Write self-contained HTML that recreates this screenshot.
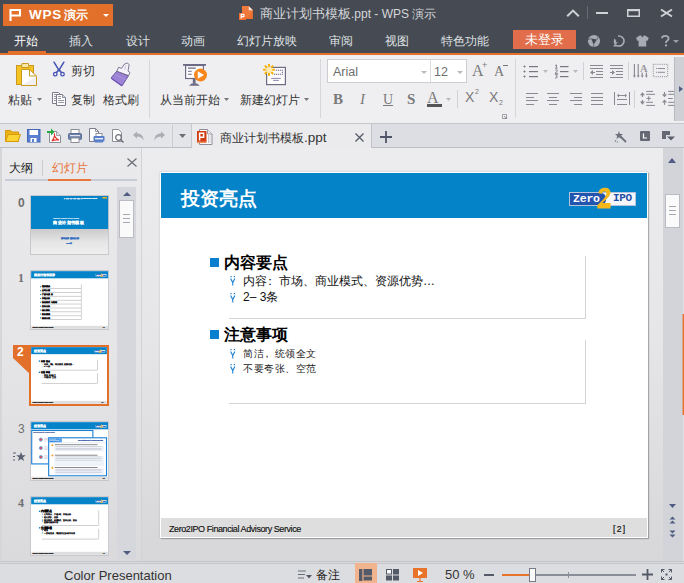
<!DOCTYPE html>
<html><head><meta charset="utf-8">
<style>
*{margin:0;padding:0;box-sizing:border-box}
html,body{width:684px;height:583px;overflow:hidden;background:#e9e9eb;font-family:"Liberation Sans",sans-serif;}
.a{position:absolute}
.t{position:absolute;white-space:nowrap}
svg{position:absolute;overflow:visible}
.tab{color:#dfe1e4;font-size:12px;top:34px;line-height:14px}
.rb{color:#333;font-size:12px;line-height:14px}
.th .t{-webkit-text-stroke:1.4px currentColor !important}
</style></head><body>
<!-- ============ TOP DARK ============ -->
<div class="a" style="left:0;top:0;width:684px;height:53px;background:#464a52"></div>
<div class="a" style="left:0;top:53px;width:684px;height:2px;background:#e5702c"></div>
<!-- WPS button -->
<div class="a" style="left:3px;top:4px;width:110px;height:22px;background:#e2702a"></div>
<div class="t" style="left:29px;top:6px;font-size:13.5px;color:#fff;font-weight:bold;line-height:18px;letter-spacing:0.8px">WPS</div>
<div class="t" style="left:64px;top:6px;font-size:12.2px;color:#fff;font-weight:bold;line-height:18px">演示</div>
<svg style="left:9px;top:9px" width="13" height="13"><path d="M1.5 12V1H11V6.5H1.5" fill="none" stroke="#fff" stroke-width="2.1"/></svg>
<svg style="left:103px;top:14px" width="6" height="3"><path d="M0 0H6L3 3z" fill="#fff"/></svg>
<!-- title -->
<svg style="left:238px;top:5px" width="17" height="16" viewBox="0 0 17 16"><path d="M4 1H10.8L14.8 5V14H4z" fill="#f07a3c"/><path d="M10.8 1.2V5.2H14.8z" fill="#fbeee4"/><path d="M8 14L14.8 6.5V14z" fill="#e86a2c" opacity="0.6"/><rect x="1" y="8" width="7" height="7" fill="#f06e30"/><path d="M3.2 13.6V9.3H5.9V11.6H3.2" fill="none" stroke="#fff" stroke-width="1.3"/></svg>
<div class="t" style="left:260px;top:6px;font-size:12px;color:#d3d6da;line-height:16px"><span style="font-size:12.6px">商业计划书模板</span>.ppt - WPS <span style="font-size:12.3px">演示</span></div>
<!-- window controls -->
<svg style="left:566px;top:9px" width="14" height="9"><path d="M1.2 7.2L7 1.6L12.8 7.2" fill="none" stroke="#cfd1d6" stroke-width="2.1"/></svg>
<div class="a" style="left:587px;top:6px;width:1px;height:13px;background:#676b72"></div>
<div class="a" style="left:596px;top:12px;width:12px;height:2px;background:#cfd1d6"></div>
<svg style="left:627px;top:9px" width="13" height="8"><rect x="0.75" y="0.75" width="11.5" height="6.5" fill="none" stroke="#cfd1d6" stroke-width="1.5"/><rect x="0" y="0" width="13" height="2.2" fill="#cfd1d6"/></svg>
<svg style="left:660px;top:9px" width="13" height="8"><path d="M1 0.5L12 7.5M12 0.5L1 7.5" stroke="#cfd1d6" stroke-width="2"/></svg>
<!-- tabs -->
<div class="t tab" style="left:14px;color:#fff">开始</div>
<div class="a" style="left:8px;top:51px;width:38px;height:2px;background:#e5702c"></div>
<div class="t tab" style="left:69px">插入</div>
<div class="t tab" style="left:126px">设计</div>
<div class="t tab" style="left:181px">动画</div>
<div class="t tab" style="left:237px">幻灯片放映</div>
<div class="t tab" style="left:329px">审阅</div>
<div class="t tab" style="left:385px">视图</div>
<div class="t tab" style="left:441px">特色功能</div>
<div class="a" style="left:513px;top:30px;width:63px;height:19px;background:#e26d4a"></div>
<div class="t tab" style="left:525px;top:33px;color:#fff;font-size:12.5px">未登录</div>
<!-- right icons in tab row -->
<svg style="left:587px;top:34px" width="14" height="14"><circle cx="7" cy="7" r="6.1" fill="#a7abb3"/><path d="M4.2 4.6L10 5.6L6.6 10.8z" fill="#464a52"/><path d="M10 5.6L11.8 1.6M6.6 10.8L7 13.5M4.2 4.6L0.8 5.6" stroke="#5a5e66" stroke-width="0.9"/></svg>
<svg style="left:612px;top:34px" width="14" height="14"><path d="M6.1 2.1A5 5 0 1 1 5.3 11.7H1.6" fill="none" stroke="#a7abb3" stroke-width="1.6"/><path d="M2.6 4.5C1 7.5 1.6 10.2 4.2 11.3C4.8 8.6 4.2 6 2.6 4.5z" fill="#a7abb3"/><path d="M3 10.5L5.5 8" stroke="#a7abb3" stroke-width="1"/></svg>
<svg style="left:636px;top:35px" width="13" height="12" viewBox="0 0 13 12"><path d="M0 3L3.6 0.4H5L6.4 2.6L7.8 0.4H9.2L12.8 3L11.3 6L10.2 5.4V11.6H2.6V5.4L1.5 6z" fill="#a7abb3"/></svg>
<svg style="left:661px;top:35px" width="9" height="12" viewBox="0 0 9 12"><path d="M1 3.2C1 1.6 2.4 0.8 4.3 0.8C6.3 0.8 7.6 1.8 7.6 3.4C7.6 5.4 5 5.6 5 7.6V8" fill="none" stroke="#a7abb3" stroke-width="1.8"/><rect x="4" y="9.4" width="2" height="2" fill="#a7abb3"/></svg>
<svg style="left:673px;top:40px" width="6" height="4"><path d="M0 0H6L3 3z" fill="#9a9ea6"/></svg>

<!-- ============ RIBBON ============ -->
<div class="a" style="left:0;top:55px;width:684px;height:69px;background:#efeff1;border-bottom:1px solid #c8c9ce"></div>

<!-- paste -->
<svg style="left:12px;top:58px" width="30" height="32" viewBox="0 0 30 32"><rect x="4.5" y="7.5" width="17" height="19" fill="#f5c324" stroke="#c99a22"/><path d="M9.5 9.5L10 5.5H16.5L17 9.5z" fill="#f8e6a6" stroke="#c99a22"/><path d="M9.5 11.5H17.5L24.5 18.5V27.5H9.5z" fill="#fff" stroke="#c99a22"/><path d="M17.5 11.5V18H24.5z" fill="#fff" stroke="#c99a22" stroke-linejoin="round"/><path d="M10 27L24 18.5V27z" fill="#f0f0f2"/><path d="M24.5 18.5V27.5H9.5" fill="none" stroke="#c99a22"/></svg>
<div class="t rb" style="left:8px;top:93px">粘贴</div>
<svg style="left:37px;top:98px" width="5" height="3"><path d="M0 0H5L2.5 3z" fill="#777"/></svg>
<!-- scissors -->
<svg style="left:48px;top:58px" width="22" height="22" viewBox="0 0 22 22"><path d="M6 4.2L11.2 12.6M15.9 4.2L10.7 12.6" stroke="#4552b4" stroke-width="1.5" fill="none" stroke-linecap="round"/><path d="M11 11.5L8.5 14.5M11 11.5L13.3 14.5" stroke="#4552b4" stroke-width="1.6"/><circle cx="7.3" cy="16.2" r="1.75" fill="none" stroke="#4552b4" stroke-width="1.3"/><circle cx="14.5" cy="16.2" r="1.75" fill="none" stroke="#4552b4" stroke-width="1.3"/></svg>
<div class="t rb" style="left:71px;top:64px">剪切</div>
<!-- copy -->
<svg style="left:52px;top:92px" width="15" height="15" viewBox="0 0 15 15"><path d="M0.5 0.5H6.5L8 2V11.5H0.5z" fill="#fbfbfc" stroke="#7c7c8e"/><path d="M2 2.5H5M2 4.5H5M2 6.5H4M2 8.5H4" stroke="#8a8a9a" stroke-width="0.9"/><path d="M4.5 2.5H10.5L13.5 5.5V13.5H4.5z" fill="#fdfdfe" stroke="#7c7c8e"/><path d="M10.5 2.5V5.5H13.5" fill="#d8d8e0" stroke="#7c7c8e" stroke-width="0.8"/><path d="M6.2 4.5H9M6.2 6.5H9M6.2 8.5H12M6.2 10.5H12" stroke="#8a8a9a" stroke-width="0.9"/></svg>
<div class="t rb" style="left:71px;top:93px">复制</div>
<!-- brush -->
<svg style="left:105px;top:58px" width="32" height="32" viewBox="0 0 32 32"><path d="M11.8 13.2L23.5 17.6L17 28L6 20z" fill="#9c82d4" stroke="#5f4a9c" stroke-width="0.9" stroke-linejoin="round"/><path d="M7.5 20.5L17 27L16.2 28L6.5 21.2z" fill="#7256b8"/><path d="M10 16.5L20.5 21.5" stroke="#ad95de" stroke-width="1"/><path d="M13.7 9.3L16.5 10.4L19.5 6L22.2 5L24.2 6.6L23 12.9L25 14.6L23.5 17.6L11.8 13.2z" fill="#f6f4fa" stroke="#5f5a78" stroke-width="0.8" stroke-linejoin="round"/><path d="M21 7L19.5 12" stroke="#d4d0e4" stroke-width="1.2"/></svg>
<div class="t rb" style="left:103px;top:93px">格式刷</div>
<div class="a" style="left:149px;top:60px;width:1px;height:58px;background:#d6d7db"></div>
<!-- slideshow from current -->
<svg style="left:178px;top:58px" width="35" height="32" viewBox="0 0 35 32"><rect x="5" y="6" width="23" height="1.8" fill="#6d6b86"/><rect x="7.6" y="7.5" width="17.8" height="13" fill="#fdfdfe" stroke="#6d6b86" stroke-width="1.2"/><path d="M10 10.1H17.8M10 13.2H13.7M10 16.2H13.7" stroke="#6d6b86" stroke-width="1.1"/><path d="M14.8 20.8H17.6V25.8H14.8z" fill="#6d6b86"/><path d="M11 27.7L13.5 25.6H19L21.8 27.7z" fill="#6d6b86"/><circle cx="22.5" cy="17" r="6.5" fill="#f7861c"/><path d="M19.8 13.2L26 17L19.8 20.8z" fill="#fff"/></svg>
<div class="t rb" style="left:160px;top:93px">从当前开始</div>
<svg style="left:224px;top:98px" width="5" height="3"><path d="M0 0H5L2.5 3z" fill="#777"/></svg>
<!-- new slide -->
<svg style="left:258px;top:58px" width="35" height="32" viewBox="0 0 35 32"><rect x="8.6" y="9.4" width="18.8" height="17.2" fill="#fdfdfe" stroke="#6d6b86" stroke-width="1.2"/><rect x="17.799999999999997" y="11.7" width="1.2" height="1.2" fill="#7f7aa0"/><rect x="17.799999999999997" y="15.7" width="1.2" height="1.2" fill="#7f7aa0"/><rect x="19.799999999999997" y="11.7" width="1.2" height="1.2" fill="#7f7aa0"/><rect x="19.799999999999997" y="15.7" width="1.2" height="1.2" fill="#7f7aa0"/><rect x="21.799999999999997" y="11.7" width="1.2" height="1.2" fill="#7f7aa0"/><rect x="21.799999999999997" y="15.7" width="1.2" height="1.2" fill="#7f7aa0"/><rect x="23.799999999999997" y="11.7" width="1.2" height="1.2" fill="#7f7aa0"/><rect x="23.799999999999997" y="15.7" width="1.2" height="1.2" fill="#7f7aa0"/><rect x="23.8" y="13.7" width="1.2" height="1.2" fill="#7f7aa0"/><rect x="15.9" y="15.7" width="1.2" height="1.2" fill="#7f7aa0"/><path d="M13.2 20.4H22.8M15.1 22.4H20.8" stroke="#8e88b0" stroke-width="1"/><circle cx="11" cy="11.8" r="3.6" fill="#fde9a8" opacity="0.9"/><path d="M14.30 11.80L16.90 11.80M13.33 14.13L15.17 15.97M11.00 15.10L11.00 17.70M8.67 14.13L6.83 15.97M7.70 11.80L5.10 11.80M8.67 9.47L6.83 7.63M11.00 8.50L11.00 5.90M13.33 9.47L15.17 7.63" stroke="#f7b000" stroke-width="2" stroke-linecap="butt"/></svg>
<div class="t rb" style="left:240px;top:93px">新建幻灯片</div>
<svg style="left:304px;top:98px" width="5" height="3"><path d="M0 0H5L2.5 3z" fill="#777"/></svg>
<div class="a" style="left:320px;top:59px;width:1px;height:59px;background:#d6d7db"></div>
<!-- font box -->
<div class="a" style="left:327px;top:59px;width:140px;height:24px;background:#fff;border:1px solid #cdced3"></div>
<div class="a" style="left:430px;top:60px;width:1px;height:22px;background:#dcdde1"></div>
<div class="t" style="left:333px;top:65px;font-size:12.5px;color:#6e6e6e;line-height:14px">Arial</div>
<div class="t" style="left:434px;top:65px;font-size:12.5px;color:#6e6e6e;line-height:14px">12</div>
<svg style="left:421px;top:71px" width="6" height="3"><path d="M0 0H6L3 3z" fill="#b8b9be"/></svg>
<svg style="left:457px;top:71px" width="6" height="3"><path d="M0 0H6L3 3z" fill="#b8b9be"/></svg>
<div class="t" style="left:472px;top:63px;font-size:16px;color:#7a7a7a;line-height:16px;font-family:'Liberation Serif',serif">A</div>
<div class="t" style="left:482px;top:61px;font-size:9px;color:#777;line-height:9px">+</div>
<div class="t" style="left:494px;top:64px;font-size:14px;color:#777;line-height:15px;font-family:'Liberation Serif',serif">A</div>
<div class="a" style="left:503px;top:65px;width:5px;height:1px;background:#777"></div>
<!-- BIUS -->
<div class="t" style="left:333px;top:92px;font-size:15px;color:#7a7a7a;line-height:15px;font-weight:bold;font-family:'Liberation Serif',serif">B</div>
<div class="t" style="left:360px;top:92px;font-size:15px;color:#7a7a7a;line-height:15px;font-style:italic;font-family:'Liberation Serif',serif">I</div>
<div class="t" style="left:383px;top:92px;font-size:14px;color:#7a7a7a;line-height:15px;font-family:'Liberation Serif',serif;text-decoration:underline">U</div>
<div class="t" style="left:407px;top:92px;font-size:15px;color:#7a7a7a;line-height:15px;font-family:'Liberation Serif',serif;font-weight:bold">S</div>
<div class="t" style="left:427px;top:90px;font-size:16px;color:#7a7a7a;line-height:15px;font-family:'Liberation Serif',serif">A</div>
<div class="a" style="left:427px;top:104px;width:15px;height:3px;background:#555"></div>
<svg style="left:446px;top:98px" width="5" height="3"><path d="M0 0H5L2.5 3z" fill="#b8b9be"/></svg>
<div class="a" style="left:457px;top:90px;width:1px;height:18px;background:#d0d1d6"></div>
<div class="t" style="left:465px;top:90px;font-size:14px;color:#7a7a7a;line-height:15px">X</div>
<div class="t" style="left:475px;top:88px;font-size:7px;color:#7a7a7a;line-height:8px">2</div>
<div class="t" style="left:489px;top:90px;font-size:14px;color:#7a7a7a;line-height:15px">X</div>
<div class="t" style="left:499px;top:99px;font-size:7px;color:#7a7a7a;line-height:8px">2</div>
<svg style="left:502px;top:114px" width="5" height="5"><path d="M0.5 4.5V0.5H4.5V4.5z" fill="none" stroke="#8a8a92" stroke-width="0.8"/><path d="M2 2L4.5 4.5M3 4.5H4.5V3" stroke="#8a8a92" stroke-width="0.8" fill="none"/></svg>
<div class="a" style="left:515px;top:59px;width:1px;height:59px;background:#d6d7db"></div>
<!-- paragraph icons row1 -->
<svg style="left:523px;top:64px" width="26" height="15" viewBox="0 0 26 15"><g fill="#77787f"><path d="M1 1.5H2V2H2.5V3H2V3.5H1V3H0.5V2H1z"/><path d="M1 6.5H2V7H2.5V8H2V8.5H1V8H0.5V7H1z"/><path d="M1 11.5H2V12H2.5V13H2V13.5H1V13H0.5V12H1z"/><rect x="6" y="2" width="9" height="1.2"/><rect x="6" y="7" width="9" height="1.2"/><rect x="6" y="12" width="9" height="1.2"/></g><path d="M20 6H25L22.5 9z" fill="#b9b9bf"/></svg>
<svg style="left:554px;top:64px" width="26" height="15" viewBox="0 0 26 15"><g fill="none" stroke="#77787f" stroke-width="0.9"><path d="M1.2 1.6L2.4 0.8V4.2M1.2 4.2H3.6"/><path d="M1 6.4C1.5 5.6 3.5 5.6 3.5 6.8C3.5 7.8 1 8.5 1 9.4H3.8"/><path d="M1 10.8H3.6L2.2 12.2C3.8 12.2 3.8 14.4 1 14"/></g><g fill="#77787f"><rect x="6" y="2" width="8.5" height="1.2"/><rect x="6" y="7" width="8.5" height="1.2"/><rect x="6" y="12" width="8.5" height="1.2"/></g><path d="M19 6H24L21.5 9z" fill="#b9b9bf"/></svg>
<div class="a" style="left:583px;top:62px;width:1px;height:18px;background:#d0d1d6"></div>
<svg style="left:590px;top:65px" width="14" height="14" viewBox="0 0 14 14"><g fill="#8a8b92"><rect x="0" y="0" width="13" height="1"/><rect x="0" y="3" width="13" height="1"/><rect x="6" y="6" width="7" height="1"/><rect x="6" y="9" width="7" height="1"/><rect x="0" y="12" width="13" height="1"/><path d="M0 7.5L3 5V10z"/><rect x="2" y="7" width="3" height="1"/></g></svg>
<svg style="left:610px;top:65px" width="14" height="14" viewBox="0 0 14 14"><g fill="#8a8b92"><rect x="0" y="0" width="13" height="1"/><rect x="0" y="3" width="13" height="1"/><rect x="6" y="6" width="7" height="1"/><rect x="6" y="9" width="7" height="1"/><rect x="0" y="12" width="13" height="1"/><path d="M5 7.5L2 5V10z"/><rect x="0" y="7" width="3" height="1"/></g></svg>
<div class="a" style="left:628px;top:62px;width:1px;height:18px;background:#d0d1d6"></div>
<svg style="left:630px;top:60px" width="44" height="22" viewBox="0 0 44 22"><g stroke="#85868e" stroke-width="1.1" fill="none"><path d="M4.4 4V16M8.2 4V16M12.2 12.6V16M16.4 12.6V16"/></g><g fill="#85868e"><path d="M3 15.4H5.8L4.4 17.8zM6.8 15.4H9.6L8.2 17.8zM10.8 15.4H13.6L12.2 17.8zM15 15.4H17.8L16.4 17.8z"/></g><text x="10" y="12" font-size="10.5" fill="#9a9aa2" font-family="Liberation Serif" font-weight="bold">A</text><rect x="23.3" y="4.3" width="14.4" height="12.4" fill="none" stroke="#8a8b92" stroke-width="1" stroke-dasharray="1 1.1"/><path d="M27.7 8.5H35M27.7 12.3H35" stroke="#8e8f96" stroke-width="1"/><rect x="26" y="8" width="1" height="1" fill="#8e8f96"/><rect x="26" y="11.8" width="1" height="1" fill="#8e8f96"/></svg>
<!-- expander right -->
<div class="a" style="left:674px;top:57px;width:10px;height:64px;background:#cfd0d6;border-left:1px solid #b9bac1"></div>
<svg style="left:679px;top:86px" width="4" height="6"><path d="M0 0L4 3L0 6z" fill="#4f5d83"/></svg>
<!-- paragraph icons row2 -->
<svg style="left:526px;top:93px" width="13" height="12"><g fill="#8a8b92"><rect x="0" y="0" width="12" height="1"/><rect x="0" y="4" width="8" height="1"/><rect x="0" y="7" width="12" height="1"/><rect x="0" y="11" width="8" height="1"/></g></svg>
<svg style="left:547px;top:93px" width="13" height="12"><g fill="#8a8b92"><rect x="0" y="0" width="12" height="1"/><rect x="2" y="4" width="8" height="1"/><rect x="0" y="7" width="12" height="1"/><rect x="2" y="11" width="8" height="1"/></g></svg>
<svg style="left:570px;top:93px" width="13" height="12"><g fill="#8a8b92"><rect x="0" y="0" width="12" height="1"/><rect x="4" y="4" width="8" height="1"/><rect x="0" y="7" width="12" height="1"/><rect x="4" y="11" width="8" height="1"/></g></svg>
<svg style="left:591px;top:93px" width="13" height="12"><g fill="#8a8b92"><rect x="0" y="0" width="12" height="1"/><rect x="0" y="4" width="12" height="1"/><rect x="0" y="7" width="12" height="1"/><rect x="0" y="11" width="12" height="1"/></g></svg>
<svg style="left:614px;top:92px" width="16" height="14" viewBox="0 0 16 14"><g fill="#8a8b92"><rect x="0" y="0" width="1" height="13"/><rect x="15" y="0" width="1" height="13"/><rect x="3" y="7" width="10" height="1"/><rect x="3" y="12" width="10" height="1"/><rect x="4" y="3" width="8" height="1"/><path d="M3 3.5L5 1.5V5.5zM13 3.5L11 1.5V5.5z"/></g></svg>
<div class="a" style="left:634px;top:90px;width:1px;height:18px;background:#d0d1d6"></div>
<svg style="left:636px;top:88px" width="38" height="22" viewBox="0 0 38 22"><g fill="#86878f"><path d="M4 7.2L6.45 4.2L8.9 7.2z"/><rect x="5.9" y="7" width="1.1" height="2"/><path d="M4 13.6L6.45 16.8L8.9 13.6z"/><rect x="5.9" y="12" width="1.1" height="2"/><rect x="10.2" y="2.9" width="6.8" height="1"/><rect x="10.2" y="5.8" width="8.8" height="1"/><rect x="10.2" y="13.8" width="6.8" height="1"/><rect x="10.2" y="16.9" width="8.8" height="1"/><rect x="10.5" y="9.9" width="4.4" height="1"/><rect x="12.2" y="8.2" width="1" height="4.4"/><path d="M26 6.2L28.5 9.2L31 6.2z"/><rect x="27.95" y="4" width="1.1" height="2.4"/><path d="M26 14.6L28.5 11.6L31 14.6z"/><rect x="27.95" y="14.4" width="1.1" height="2.4"/><rect x="32.2" y="2.9" width="6" height="1"/><rect x="32.2" y="5.8" width="6" height="1"/><rect x="32.2" y="10" width="4.6" height="1"/><rect x="32.2" y="13.8" width="6" height="1"/><rect x="32.2" y="16.9" width="6" height="1"/></g></svg>
<!-- ============ QAT ============ -->
<div class="a" style="left:0;top:123px;width:684px;height:25px;background:#dddee3;border-top:1px solid #c6c7cc;border-bottom:1px solid #bdbec4"></div>
<div class="a" style="left:0;top:124px;width:192px;height:23px;background:#e4e5e9;border-right:1px solid #c8c9ce"></div>
<div class="a" style="left:192px;top:124px;width:180px;height:24px;background:#ebebed;border-right:1px solid #c3c4ca"></div>
<!-- folder -->
<svg style="left:5px;top:129px" width="16" height="14" viewBox="0 0 16 14"><path d="M0.5 1.5H5.5L7 3H13.5V12.5H0.5z" fill="#eab31b" stroke="#d4960b"/><path d="M0.5 12.5L3 5.5H15.5L13 12.5z" fill="#fbd433" stroke="#d99a0a" stroke-linejoin="round"/></svg>
<!-- save -->
<svg style="left:27px;top:129px" width="14" height="14" viewBox="0 0 14 14"><rect x="0.5" y="0.5" width="12.5" height="12.5" fill="#5b7fd0" stroke="#4466b8"/><rect x="2.5" y="1" width="8.5" height="5" fill="#fff"/><rect x="3.5" y="9" width="6" height="4" fill="#fff"/><rect x="5" y="10" width="2" height="3" fill="#5b7fd0"/></svg>
<!-- pdf -->
<svg style="left:47px;top:128px" width="15" height="15" viewBox="0 0 15 15"><path d="M2.5 3.5H9.5L13.5 7.5V14.5H2.5z" fill="#fff" stroke="#8c8d96"/><path d="M9.5 3.5V7.5H13.5" fill="#e5e5ea" stroke="#8c8d96" stroke-width="0.8"/><path d="M0 3H4V0.5L7.5 4L4 7.5V5H0z" fill="#28a745"/><path d="M5 13C7 10 8 8 7.5 6.5C7 8 9 11 12 12C9 11.5 6.5 12 5 13z" fill="none" stroke="#e0302a" stroke-width="1.2"/></svg>
<!-- print -->
<svg style="left:68px;top:129px" width="15" height="14" viewBox="0 0 15 14"><rect x="3" y="0.5" width="8" height="4" fill="#fff" stroke="#8c8d96"/><rect x="0.5" y="4.5" width="13" height="6" rx="1" fill="#6b7fa8" stroke="#5a6e98"/><rect x="2" y="6" width="10" height="1.2" fill="#dfe3ee"/><rect x="3" y="9" width="8" height="4.5" fill="#fff" stroke="#8c8d96"/></svg>
<!-- print preview -->
<svg style="left:89px;top:128px" width="16" height="16" viewBox="0 0 16 16"><path d="M0.5 0.5H6.5L9.5 3.5V13.5H0.5z" fill="#fff" stroke="#7c7c8e"/><path d="M6.5 0.5V3.5H9.5" fill="none" stroke="#7c7c8e" stroke-width="0.8"/><rect x="7" y="5.5" width="6" height="3" fill="#fff" stroke="#7c7c8e" stroke-width="0.8"/><rect x="4.5" y="8" width="11" height="5.5" rx="1" fill="#5b7fc8"/><rect x="6" y="10" width="8" height="1.4" fill="#e8eef8"/><rect x="6" y="12.5" width="8" height="2" fill="#5b7fc8"/></svg>
<!-- preview -->
<svg style="left:112px;top:129px" width="13" height="14" viewBox="0 0 13 14"><path d="M0.5 0.5H6.5L9.5 3.5V12.5H0.5z" fill="#fff" stroke="#8c8d96"/><circle cx="6.5" cy="8.5" r="2.8" fill="#fff" stroke="#6d6e78" stroke-width="1.2"/><path d="M8.5 10.5L11.5 13.5" stroke="#6d6e78" stroke-width="1.4"/></svg>
<!-- undo/redo -->
<svg style="left:133px;top:131px" width="11" height="10" viewBox="0 0 11 10"><path d="M0 4L4 0.5V2.5C8 2.5 10.5 4.5 10.5 9.5C9 6.5 7 5.5 4 5.5V7.5z" fill="#acadb4"/></svg>
<svg style="left:154px;top:131px" width="11" height="10" viewBox="0 0 11 10"><path d="M11 4L7 0.5V2.5C3 2.5 0.5 4.5 0.5 9.5C2 6.5 4 5.5 7 5.5V7.5z" fill="#acadb4"/></svg>
<div class="a" style="left:172px;top:125px;width:1px;height:22px;background:#cbccd1"></div>
<svg style="left:179px;top:134px" width="7" height="4"><path d="M0 0H7L3.5 4z" fill="#6c6f78"/></svg>
<!-- doc tab -->
<svg style="left:196px;top:129px" width="17" height="16" viewBox="0 0 17 16"><path d="M3.5 0.5H11.5L16 5V15.5H3.5z" fill="#fff" stroke="#8c8d96"/><path d="M11.5 0.5V5H16" fill="#ececf0" stroke="#8c8d96" stroke-width="0.8"/><path d="M12 7H14.5M12 9H14.5M12 11H14.5M12 13H14.5" stroke="#8a8b94" stroke-width="0.9" stroke-dasharray="1 0.6"/><rect x="1" y="2" width="9.5" height="11" fill="#d23c12"/><rect x="1" y="12.5" width="9.5" height="1.6" fill="#ee8a5c"/><path d="M3.6 11.5V4.3H7.6V8.3H3.6" fill="none" stroke="#fff" stroke-width="1.5"/></svg>
<div class="t" style="left:220px;top:131px;font-size:12px;color:#333;line-height:14px">商业计划书模板<span style="font-size:13.5px">.ppt</span></div>
<svg style="left:355px;top:133px" width="9" height="9"><path d="M0.5 0.5L8.5 8.5M8.5 0.5L0.5 8.5" stroke="#555a68" stroke-width="1.3"/></svg>
<svg style="left:380px;top:131px" width="12" height="12"><path d="M6 0V12M0 6H12" stroke="#4f5566" stroke-width="1.8"/></svg>
<!-- right QAT icons -->
<svg style="left:614px;top:130px" width="13" height="13" viewBox="0 0 13 13"><path d="M5 1L6 4L9 4L6.8 6L7.6 9L5 7.3L2.4 9L3.2 6L1 4L4 4z" fill="#6d707a"/><path d="M6.5 6.5L12 12" stroke="#6d707a" stroke-width="1.8"/><circle cx="1.5" cy="11" r="0.8" fill="#6d707a"/><circle cx="3.5" cy="12" r="0.6" fill="#6d707a"/></svg>
<svg style="left:640px;top:131px" width="10" height="10"><rect x="0" y="0" width="10" height="10" rx="1" fill="#666975"/><path d="M3.5 2.5V7H7" fill="none" stroke="#fff" stroke-width="1.2"/></svg>
<svg style="left:662px;top:131px" width="13" height="11" viewBox="0 0 13 11"><path d="M0 0H8V4H4V8H0z" fill="#666975"/><path d="M5 5.5H13L9 9.5z" fill="#5a5e6a"/></svg>

<!-- ============ MAIN ============ -->
<div class="a" style="left:0;top:148px;width:142px;height:414px;background:linear-gradient(#eaeaec 0%,#e5e5e7 50%,#dadadd 100%);border-right:1px solid #d2d3d7;border-left:2px solid #d6d6d8"></div>
<div class="a" style="left:142px;top:148px;width:521px;height:414px;background:linear-gradient(#ececee 0%,#e6e6e8 45%,#d7d7da 100%)"></div>
<div class="a" style="left:663px;top:148px;width:20px;height:414px;background:#d3d4da"></div>
<div class="a" style="left:683px;top:148px;width:1px;height:414px;background:#e0e1e5"></div>


<!-- left panel tabs -->
<div class="t" style="left:9px;top:161px;font-size:12px;color:#222;line-height:14px">大纲</div>
<div class="a" style="left:42px;top:160px;width:1px;height:16px;background:#c9cace"></div>
<div class="t" style="left:52px;top:161px;font-size:12px;color:#e8763a;line-height:14px">幻灯片</div>
<svg style="left:127px;top:158px" width="10" height="9"><path d="M0.5 0.5L9.5 8.5M9.5 0.5L0.5 8.5" stroke="#6b6e76" stroke-width="1.2"/></svg>
<div class="a" style="left:5px;top:179px;width:132px;height:2px;background:#c9cbd6"></div>
<div class="a" style="left:48px;top:179px;width:43px;height:2px;background:#e8763a"></div>
<!-- left scrollbar -->
<div class="a" style="left:117px;top:187px;width:19px;height:372px;background:#d6d7dc"></div>
<svg style="left:123px;top:192px" width="8" height="4"><path d="M0 4L4 0L8 4z" fill="#4f5d83"/></svg>
<div class="a" style="left:119px;top:200px;width:15px;height:38px;background:#fafafa;border:1px solid #b9bac2"></div>
<div class="a" style="left:123px;top:214px;width:7px;height:1px;background:#a6a8b2"></div>
<div class="a" style="left:123px;top:218px;width:7px;height:1px;background:#a6a8b2"></div>
<div class="a" style="left:123px;top:222px;width:7px;height:1px;background:#a6a8b2"></div>
<svg style="left:123px;top:551px" width="8" height="4"><path d="M0 0L8 0L4 4z" fill="#4f5d83"/></svg>
<!-- thumbnail labels -->
<div class="t" style="left:18px;top:197px;font-size:12px;color:#707070;line-height:13px;font-weight:bold">0</div>
<div class="t" style="left:18px;top:272px;font-size:12px;color:#707070;line-height:13px;font-weight:bold;font-family:'Liberation Serif',serif">1</div>
<div class="t" style="left:18px;top:423px;font-size:12px;color:#707070;line-height:13px">3</div>
<div class="t" style="left:18px;top:497px;font-size:12px;color:#707070;line-height:13px;font-weight:bold;font-family:'Liberation Serif',serif">4</div>
<div class="a" style="left:30px;top:195px;width:79px;height:60px;background:#c8c8cc;"></div><div class="a th" style="left:31px;top:196px;width:488px;height:366px;transform:scale(0.1585);transform-origin:0 0;overflow:hidden"><div class="a" style="left:0px;top:0px;width:488px;height:366px;background:linear-gradient(#c8c8c8 55%,#e6e6e6 80%,#eeeeee);"></div><div class="a" style="left:0px;top:0px;width:488px;height:208px;background:#0483c9;"></div><div class="t" style="left:210px;top:9px;font-size:9px;color:#e8f0f8;line-height:10.35px;font-weight:bold;line-height:10px;letter-spacing:-0.5px">清科集团 商业计划书模板系列 Business Plan Template</div><div class="a" style="left:450px;top:6px;width:30px;height:10px;background:#f3b51b;opacity:0.9"></div><div class="t" style="left:140px;top:137px;font-size:10px;color:#d0e4f4;line-height:11.5px;line-height:10px">Zero2IPO Financial Advisory Service</div><div class="t" style="left:140px;top:154px;font-size:28px;color:#fff;line-height:32.2px;font-weight:bold;line-height:30px">商业计划书模板</div><div class="t" style="left:192px;top:262px;font-size:12px;color:#2f6cc0;line-height:13.8px;font-weight:bold;line-height:13px">清科集团 投资银行部</div><div class="t" style="left:222px;top:290px;font-size:11px;color:#2f6cc0;line-height:12.65px;font-weight:bold;line-height:12px">2008年</div></div><div class="a" style="left:30px;top:270px;width:79px;height:60px;background:#c8c8cc;"></div><div class="a th" style="left:31px;top:271px;width:488px;height:366px;transform:scale(0.1585);transform-origin:0 0;overflow:hidden"><div class="a" style="left:0px;top:0px;width:488px;height:366px;background:#fff;"></div><div class="a" style="left:1px;top:1px;width:486px;height:45px;background:#0483c9;"></div><div class="t" style="left:21px;top:17px;font-size:18.5px;color:#fff;line-height:21.27px;font-weight:bold;line-height:20px">商业计划书目录</div><div class="a" style="left:409px;top:20px;width:67px;height:14px;background:#f4f6fa;border:1px solid #b4c2da"></div><div class="a" style="left:410px;top:21px;width:36px;height:12px;background:#2455ae;border-radius:0 5px 5px 0"></div><div class="t" style="left:413px;top:20px;font-size:11.5px;color:#fff;line-height:13.22px;font-weight:bold;font-family:'Liberation Mono',monospace;letter-spacing:-0.2px;line-height:13px">Zero</div><div class="t" style="left:453px;top:20px;font-size:11px;color:#1e4fa6;line-height:12.65px;font-weight:bold;font-family:'Liberation Mono',monospace;letter-spacing:-0.3px;line-height:13px">IPO</div><svg style="left:430px;top:11px" width="30" height="30" viewBox="0 0 30 30"><path d="M8.3 10.2C8.8 6.6 11.8 4.8 15 4.8C18.5 4.8 20.4 6.8 20.4 9.4C20.4 12.8 17 15.6 12.8 19.4L12.2 20H20.6V25.6H7.2V22.4C12 18 16.4 13.6 16.4 10.6C16.4 9.1 15.5 8.4 14.3 8.4C12.9 8.4 12.1 9.4 11.9 10.8z" fill="#f5b81c"/></svg><div class="a" style="left:57px;top:96.0px;width:7px;height:7px;background:#1a7fd0;"></div><div class="t" style="left:68px;top:92.0px;font-size:14px;color:#000;line-height:16.1px;font-weight:bold;line-height:15px">项目概况</div><div class="a" style="left:68px;top:108.0px;width:248px;height:5px;background:#c4c4c4;"></div><div class="a" style="left:315px;top:84.0px;width:5px;height:25px;background:#c8c8c8;"></div><div class="a" style="left:57px;top:120.5px;width:7px;height:7px;background:#1a7fd0;"></div><div class="t" style="left:68px;top:116.5px;font-size:14px;color:#000;line-height:16.1px;font-weight:bold;line-height:15px">公司介绍</div><div class="a" style="left:68px;top:132.5px;width:248px;height:5px;background:#c4c4c4;"></div><div class="a" style="left:315px;top:108.5px;width:5px;height:25px;background:#c8c8c8;"></div><div class="a" style="left:57px;top:145.0px;width:7px;height:7px;background:#1a7fd0;"></div><div class="t" style="left:68px;top:141.0px;font-size:14px;color:#000;line-height:16.1px;font-weight:bold;line-height:15px">产品与服务</div><div class="a" style="left:68px;top:157.0px;width:248px;height:5px;background:#c4c4c4;"></div><div class="a" style="left:315px;top:133.0px;width:5px;height:25px;background:#c8c8c8;"></div><div class="a" style="left:57px;top:169.5px;width:7px;height:7px;background:#1a7fd0;"></div><div class="t" style="left:68px;top:165.5px;font-size:14px;color:#000;line-height:16.1px;font-weight:bold;line-height:15px">市场分析</div><div class="a" style="left:68px;top:181.5px;width:248px;height:5px;background:#c4c4c4;"></div><div class="a" style="left:315px;top:157.5px;width:5px;height:25px;background:#c8c8c8;"></div><div class="a" style="left:57px;top:194.0px;width:7px;height:7px;background:#1a7fd0;"></div><div class="t" style="left:68px;top:190.0px;font-size:14px;color:#000;line-height:16.1px;font-weight:bold;line-height:15px">商业模式与盈利</div><div class="a" style="left:68px;top:206.0px;width:248px;height:5px;background:#c4c4c4;"></div><div class="a" style="left:315px;top:182.0px;width:5px;height:25px;background:#c8c8c8;"></div><div class="a" style="left:57px;top:218.5px;width:7px;height:7px;background:#1a7fd0;"></div><div class="t" style="left:68px;top:214.5px;font-size:14px;color:#000;line-height:16.1px;font-weight:bold;line-height:15px">竞争分析</div><div class="a" style="left:68px;top:230.5px;width:248px;height:5px;background:#c4c4c4;"></div><div class="a" style="left:315px;top:206.5px;width:5px;height:25px;background:#c8c8c8;"></div><div class="a" style="left:57px;top:243.0px;width:7px;height:7px;background:#1a7fd0;"></div><div class="t" style="left:68px;top:239.0px;font-size:14px;color:#000;line-height:16.1px;font-weight:bold;line-height:15px">核心团队</div><div class="a" style="left:68px;top:255.0px;width:248px;height:5px;background:#c4c4c4;"></div><div class="a" style="left:315px;top:231.0px;width:5px;height:25px;background:#c8c8c8;"></div><div class="a" style="left:57px;top:267.5px;width:7px;height:7px;background:#1a7fd0;"></div><div class="t" style="left:68px;top:263.5px;font-size:14px;color:#000;line-height:16.1px;font-weight:bold;line-height:15px">财务预测</div><div class="a" style="left:68px;top:279.5px;width:248px;height:5px;background:#c4c4c4;"></div><div class="a" style="left:315px;top:255.5px;width:5px;height:25px;background:#c8c8c8;"></div><div class="a" style="left:57px;top:292.0px;width:7px;height:7px;background:#1a7fd0;"></div><div class="t" style="left:68px;top:288.0px;font-size:14px;color:#000;line-height:16.1px;font-weight:bold;line-height:15px">融资计划</div><div class="a" style="left:68px;top:304.0px;width:248px;height:5px;background:#c4c4c4;"></div><div class="a" style="left:315px;top:280.0px;width:5px;height:25px;background:#c8c8c8;"></div><div class="a" style="left:1px;top:346px;width:486px;height:19px;background:#dedede;"></div><div class="t" style="left:9px;top:352px;font-size:9px;color:#111;line-height:10.35px;letter-spacing:-0.42px;-webkit-text-stroke:0.15px #111;line-height:10px">Zero2IPO Financial Advisory Service</div><div class="t" style="left:453px;top:352px;font-size:8.5px;color:#111;line-height:9.77px;letter-spacing:1.3px;-webkit-text-stroke:0.2px #111;line-height:10px">[1]</div></div><svg style="left:13px;top:345px" width="18" height="32"><path d="M0 0H18V30L0 13z" fill="#e2702a"/></svg><div class="t" style="left:17px;top:346px;font-size:12px;color:#fff;line-height:13px;font-weight:bold">2</div><div class="a" style="left:29px;top:345px;width:80px;height:61px;background:#e2702a;"></div><div class="a th" style="left:31px;top:347px;width:488px;height:366px;transform:scale(0.1557377049180328);transform-origin:0 0;overflow:hidden"><div class="a" style="left:0px;top:0px;width:488px;height:366px;background:#fff;"></div><div class="a" style="left:1px;top:1px;width:486px;height:45px;background:#0483c9;"></div><div class="t" style="left:21px;top:17px;font-size:18.5px;color:#fff;line-height:21.27px;font-weight:bold;line-height:20px">投资亮点</div><div class="a" style="left:409px;top:20px;width:67px;height:14px;background:#f4f6fa;border:1px solid #b4c2da"></div><div class="a" style="left:410px;top:21px;width:36px;height:12px;background:#2455ae;border-radius:0 5px 5px 0"></div><div class="t" style="left:413px;top:20px;font-size:11.5px;color:#fff;line-height:13.22px;font-weight:bold;font-family:'Liberation Mono',monospace;letter-spacing:-0.2px;line-height:13px">Zero</div><div class="t" style="left:453px;top:20px;font-size:11px;color:#1e4fa6;line-height:12.65px;font-weight:bold;font-family:'Liberation Mono',monospace;letter-spacing:-0.3px;line-height:13px">IPO</div><svg style="left:430px;top:11px" width="30" height="30" viewBox="0 0 30 30"><path d="M8.3 10.2C8.8 6.6 11.8 4.8 15 4.8C18.5 4.8 20.4 6.8 20.4 9.4C20.4 12.8 17 15.6 12.8 19.4L12.2 20H20.6V25.6H7.2V22.4C12 18 16.4 13.6 16.4 10.6C16.4 9.1 15.5 8.4 14.3 8.4C12.9 8.4 12.1 9.4 11.9 10.8z" fill="#f5b81c"/></svg><div class="a" style="left:50px;top:86px;width:9px;height:9px;background:#0a7fd0;"></div><div class="t" style="left:64px;top:82px;font-size:16px;color:#000;line-height:18.4px;font-weight:bold;line-height:18px">内容要点</div><div class="a" style="left:425px;top:84px;width:5px;height:63px;background:#c4c4c4;"></div><div class="a" style="left:69px;top:146px;width:357px;height:5px;background:#c4c4c4;"></div><svg style="left:70px;top:104px" width="6" height="10" viewBox="0 0 6 10"><rect x="0.5" y="0" width="1.2" height="1.2" fill="#1a7fd0"/><rect x="3.8" y="0" width="1.2" height="1.2" fill="#1a7fd0"/><path d="M0.6 2.5L2.75 6.5L4.9 2.5M2.75 6.3V9.5" fill="none" stroke="#1a7fd0" stroke-width="1.1"/></svg><div class="t" style="left:83px;top:102px;font-size:12px;color:#111;line-height:13.8px;line-height:14px">内容<span style="position:relative;left:-3px">：</span>市场、商业模式、资源优势…</div><svg style="left:70px;top:121px" width="6" height="10" viewBox="0 0 6 10"><rect x="0.5" y="0" width="1.2" height="1.2" fill="#1a7fd0"/><rect x="3.8" y="0" width="1.2" height="1.2" fill="#1a7fd0"/><path d="M0.6 2.5L2.75 6.5L4.9 2.5M2.75 6.3V9.5" fill="none" stroke="#1a7fd0" stroke-width="1.1"/></svg><div class="t" style="left:83px;top:118px;font-size:12px;color:#111;line-height:13.8px;line-height:14px">2– 3条</div><div class="a" style="left:50px;top:158px;width:9px;height:9px;background:#0a7fd0;"></div><div class="t" style="left:64px;top:154px;font-size:16px;color:#000;line-height:18.4px;font-weight:bold;line-height:18px">注意事项</div><div class="a" style="left:425px;top:168px;width:5px;height:64px;background:#c4c4c4;"></div><div class="a" style="left:69px;top:231px;width:357px;height:5px;background:#c4c4c4;"></div><svg style="left:70px;top:177px" width="6" height="10" viewBox="0 0 6 10"><rect x="0.5" y="0" width="1.2" height="1.2" fill="#1a7fd0"/><rect x="3.8" y="0" width="1.2" height="1.2" fill="#1a7fd0"/><path d="M0.6 2.5L2.75 6.5L4.9 2.5M2.75 6.3V9.5" fill="none" stroke="#1a7fd0" stroke-width="1.1"/></svg><div class="t" style="left:83px;top:176px;font-size:10px;color:#1a1a1a;line-height:11.5px;line-height:12px;letter-spacing:0.55px">简洁<span style="position:relative;left:-2px">，</span>统领全文</div><svg style="left:70px;top:192px" width="6" height="10" viewBox="0 0 6 10"><rect x="0.5" y="0" width="1.2" height="1.2" fill="#1a7fd0"/><rect x="3.8" y="0" width="1.2" height="1.2" fill="#1a7fd0"/><path d="M0.6 2.5L2.75 6.5L4.9 2.5M2.75 6.3V9.5" fill="none" stroke="#1a7fd0" stroke-width="1.1"/></svg><div class="t" style="left:83px;top:191px;font-size:10px;color:#1a1a1a;line-height:11.5px;line-height:12px;letter-spacing:0.55px">不要夸张、空范</div><div class="a" style="left:1px;top:346px;width:486px;height:19px;background:#dedede;"></div><div class="t" style="left:9px;top:352px;font-size:9px;color:#111;line-height:10.35px;letter-spacing:-0.42px;-webkit-text-stroke:0.15px #111;line-height:10px">Zero2IPO Financial Advisory Service</div><div class="t" style="left:453px;top:352px;font-size:8.5px;color:#111;line-height:9.77px;letter-spacing:1.3px;-webkit-text-stroke:0.2px #111;line-height:10px">[2]</div></div><div class="a" style="left:30px;top:421px;width:79px;height:60px;background:#c8c8cc;"></div><div class="a th" style="left:31px;top:422px;width:488px;height:366px;transform:scale(0.1585);transform-origin:0 0;overflow:hidden"><div class="a" style="left:0px;top:0px;width:488px;height:366px;background:#fff;"></div><div class="a" style="left:1px;top:1px;width:486px;height:45px;background:#0483c9;"></div><div class="t" style="left:21px;top:17px;font-size:18.5px;color:#fff;line-height:21.27px;font-weight:bold;line-height:20px">投资亮点</div><div class="a" style="left:409px;top:20px;width:67px;height:14px;background:#f4f6fa;border:1px solid #b4c2da"></div><div class="a" style="left:410px;top:21px;width:36px;height:12px;background:#2455ae;border-radius:0 5px 5px 0"></div><div class="t" style="left:413px;top:20px;font-size:11.5px;color:#fff;line-height:13.22px;font-weight:bold;font-family:'Liberation Mono',monospace;letter-spacing:-0.2px;line-height:13px">Zero</div><div class="t" style="left:453px;top:20px;font-size:11px;color:#1e4fa6;line-height:12.65px;font-weight:bold;font-family:'Liberation Mono',monospace;letter-spacing:-0.3px;line-height:13px">IPO</div><svg style="left:430px;top:11px" width="30" height="30" viewBox="0 0 30 30"><path d="M8.3 10.2C8.8 6.6 11.8 4.8 15 4.8C18.5 4.8 20.4 6.8 20.4 9.4C20.4 12.8 17 15.6 12.8 19.4L12.2 20H20.6V25.6H7.2V22.4C12 18 16.4 13.6 16.4 10.6C16.4 9.1 15.5 8.4 14.3 8.4C12.9 8.4 12.1 9.4 11.9 10.8z" fill="#f5b81c"/></svg><div class="a" style="left:1px;top:50px;width:393px;height:218px;background:#fff;border:7px solid #1a7fd3;box-sizing:border-box"></div><div class="t" style="left:14px;top:57px;font-size:13px;color:#5a6aa0;line-height:14.95px;font-weight:bold;line-height:14px">Investment Highlights</div><div class="a" style="left:49px;top:98px;width:26px;height:26px;background:#e04b5a;border:6px solid #74a8dc;box-sizing:border-box;border-radius:13px"></div><div class="a" style="left:82px;top:102px;width:38px;height:4px;background:#c8c8d0;"></div><div class="a" style="left:82px;top:110px;width:30px;height:4px;background:#d0d0d8;"></div><div class="a" style="left:82px;top:118px;width:34px;height:4px;background:#d0d0d8;"></div><div class="a" style="left:49px;top:151px;width:26px;height:26px;background:#e04b5a;border:6px solid #74a8dc;box-sizing:border-box;border-radius:13px"></div><div class="a" style="left:82px;top:155px;width:38px;height:4px;background:#c8c8d0;"></div><div class="a" style="left:82px;top:163px;width:30px;height:4px;background:#d0d0d8;"></div><div class="a" style="left:82px;top:171px;width:34px;height:4px;background:#d0d0d8;"></div><div class="a" style="left:49px;top:208px;width:26px;height:26px;background:#e04b5a;border:6px solid #74a8dc;box-sizing:border-box;border-radius:13px"></div><div class="a" style="left:82px;top:212px;width:38px;height:4px;background:#c8c8d0;"></div><div class="a" style="left:82px;top:220px;width:30px;height:4px;background:#d0d0d8;"></div><div class="a" style="left:82px;top:228px;width:34px;height:4px;background:#d0d0d8;"></div><div class="a" style="left:108px;top:96px;width:372px;height:247px;background:#fff;border:7px solid #1a7fd3;box-sizing:border-box"></div><div class="a" style="left:116px;top:102px;width:79px;height:26px;background:linear-gradient(90deg,#2f86e0,#5aa6ec);"></div><div class="a" style="left:118px;top:106px;width:40px;height:4px;background:#cfe4f8;"></div><div class="a" style="left:118px;top:114px;width:60px;height:4px;background:#cfe4f8;"></div><div class="t" style="left:296px;top:106px;font-size:15px;color:#2a4ea0;line-height:17.25px;font-weight:bold;line-height:16px">Investment Highlights</div><div class="a" style="left:115px;top:131px;width:358px;height:2px;background:#a8bedc;"></div><div class="a" style="left:129px;top:140px;width:12px;height:12px;background:#f59a1a;border-radius:6px"></div><div class="a" style="left:150px;top:142px;width:270px;height:4px;background:#444;"></div><div class="a" style="left:147px;top:150px;width:313px;height:34px;background:#eef3fa;"></div><div class="a" style="left:155px;top:154px;width:290px;height:3px;background:#b8b8c4;"></div><div class="a" style="left:155px;top:164px;width:290px;height:3px;background:#b8b8c4;"></div><div class="a" style="left:155px;top:174px;width:290px;height:3px;background:#b8b8c4;"></div><div class="a" style="left:129px;top:205px;width:12px;height:12px;background:#f59a1a;border-radius:6px"></div><div class="a" style="left:150px;top:207px;width:270px;height:4px;background:#444;"></div><div class="a" style="left:147px;top:215px;width:313px;height:62px;background:#eef3fa;"></div><div class="a" style="left:155px;top:219px;width:290px;height:3px;background:#b8b8c4;"></div><div class="a" style="left:155px;top:229px;width:290px;height:3px;background:#b8b8c4;"></div><div class="a" style="left:155px;top:239px;width:290px;height:3px;background:#b8b8c4;"></div><div class="a" style="left:129px;top:283px;width:12px;height:12px;background:#f59a1a;border-radius:6px"></div><div class="a" style="left:150px;top:285px;width:270px;height:4px;background:#444;"></div><div class="a" style="left:147px;top:293px;width:313px;height:40px;background:#eef3fa;"></div><div class="a" style="left:155px;top:297px;width:290px;height:3px;background:#b8b8c4;"></div><div class="a" style="left:155px;top:307px;width:290px;height:3px;background:#b8b8c4;"></div><div class="a" style="left:155px;top:317px;width:290px;height:3px;background:#b8b8c4;"></div><div class="a" style="left:1px;top:346px;width:486px;height:19px;background:#dedede;"></div><div class="t" style="left:9px;top:352px;font-size:9px;color:#111;line-height:10.35px;letter-spacing:-0.42px;-webkit-text-stroke:0.15px #111;line-height:10px">Zero2IPO Financial Advisory Service</div><div class="t" style="left:453px;top:352px;font-size:8.5px;color:#111;line-height:9.77px;letter-spacing:1.3px;-webkit-text-stroke:0.2px #111;line-height:10px">[3]</div></div><svg style="left:13px;top:452px" width="13" height="10" viewBox="0 0 13 10"><path d="M0 1H3M0 4.5H2M0 8H2" stroke="#5c6272" stroke-width="1"/><path d="M8 0L9.3 3.3H12.8L10 5.5L11 9L8 7L5 9L6 5.5L3.2 3.3H6.7z" fill="#5c6272"/></svg><div class="a" style="left:30px;top:496px;width:79px;height:60px;background:#c8c8cc;"></div><div class="a th" style="left:31px;top:497px;width:488px;height:366px;transform:scale(0.1585);transform-origin:0 0;overflow:hidden"><div class="a" style="left:0px;top:0px;width:488px;height:366px;background:#fff;"></div><div class="a" style="left:1px;top:1px;width:486px;height:45px;background:#0483c9;"></div><div class="t" style="left:21px;top:17px;font-size:18.5px;color:#fff;line-height:21.27px;font-weight:bold;line-height:20px">投资亮点</div><div class="a" style="left:409px;top:20px;width:67px;height:14px;background:#f4f6fa;border:1px solid #b4c2da"></div><div class="a" style="left:410px;top:21px;width:36px;height:12px;background:#2455ae;border-radius:0 5px 5px 0"></div><div class="t" style="left:413px;top:20px;font-size:11.5px;color:#fff;line-height:13.22px;font-weight:bold;font-family:'Liberation Mono',monospace;letter-spacing:-0.2px;line-height:13px">Zero</div><div class="t" style="left:453px;top:20px;font-size:11px;color:#1e4fa6;line-height:12.65px;font-weight:bold;font-family:'Liberation Mono',monospace;letter-spacing:-0.3px;line-height:13px">IPO</div><svg style="left:430px;top:11px" width="30" height="30" viewBox="0 0 30 30"><path d="M8.3 10.2C8.8 6.6 11.8 4.8 15 4.8C18.5 4.8 20.4 6.8 20.4 9.4C20.4 12.8 17 15.6 12.8 19.4L12.2 20H20.6V25.6H7.2V22.4C12 18 16.4 13.6 16.4 10.6C16.4 9.1 15.5 8.4 14.3 8.4C12.9 8.4 12.1 9.4 11.9 10.8z" fill="#f5b81c"/></svg><div class="a" style="left:50px;top:86px;width:9px;height:9px;background:#0a7fd0;"></div><div class="t" style="left:64px;top:81px;font-size:16px;color:#000;line-height:18.4px;font-weight:bold;line-height:18px">内容要点</div><div class="a" style="left:425px;top:84px;width:5px;height:95px;background:#c4c4c4;"></div><div class="a" style="left:69px;top:178px;width:357px;height:5px;background:#c4c4c4;"></div><div class="a" style="left:69px;top:104px;width:4px;height:9px;background:#1a7fd0;"></div><div class="t" style="left:83px;top:102px;font-size:12px;color:#111;line-height:13.8px;line-height:14px">公司简介、产品介绍、市场分析</div><div class="a" style="left:69px;top:122px;width:4px;height:9px;background:#1a7fd0;"></div><div class="t" style="left:83px;top:120px;font-size:12px;color:#111;line-height:13.8px;line-height:14px">核心团队、优势</div><div class="a" style="left:69px;top:140px;width:4px;height:18px;background:#1a7fd0;"></div><div class="t" style="left:83px;top:138px;font-size:12px;color:#111;line-height:13.8px;line-height:14px">商业模式、盈利模式、竞争分析、财务</div><div class="t" style="left:83px;top:152px;font-size:12px;color:#111;line-height:13.8px;line-height:14px">预测与融资计划</div><div class="a" style="left:50px;top:190px;width:9px;height:9px;background:#0a7fd0;"></div><div class="t" style="left:64px;top:185px;font-size:16px;color:#000;line-height:18.4px;font-weight:bold;line-height:18px">注意事项</div><div class="a" style="left:425px;top:200px;width:5px;height:64px;background:#c4c4c4;"></div><div class="a" style="left:69px;top:263px;width:357px;height:5px;background:#c4c4c4;"></div><div class="a" style="left:69px;top:208px;width:4px;height:9px;background:#1a7fd0;"></div><div class="t" style="left:83px;top:206px;font-size:12px;color:#111;line-height:13.8px;line-height:14px">简洁</div><div class="a" style="left:69px;top:222px;width:4px;height:9px;background:#1a7fd0;"></div><div class="t" style="left:83px;top:220px;font-size:12px;color:#111;line-height:13.8px;line-height:14px">一页纸完成，不要展开过多细节内容</div><div class="a" style="left:1px;top:346px;width:486px;height:19px;background:#dedede;"></div><div class="t" style="left:9px;top:352px;font-size:9px;color:#111;line-height:10.35px;letter-spacing:-0.42px;-webkit-text-stroke:0.15px #111;line-height:10px">Zero2IPO Financial Advisory Service</div><div class="t" style="left:453px;top:352px;font-size:8.5px;color:#111;line-height:9.77px;letter-spacing:1.3px;-webkit-text-stroke:0.2px #111;line-height:10px">[4]</div></div>
<!-- ============ SLIDE ============ -->
<div class="a" style="left:160px;top:172px;width:488px;height:366px;background:#fff;box-shadow:0 0 2px rgba(0,0,0,0.18),1px 1px 1px rgba(0,0,0,0.22)"></div><div class="a" style="left:160px;top:172px;width:488px;height:366px"><div class="a" style="left:0px;top:0px;width:488px;height:366px;background:#fff;"></div><div class="a" style="left:1px;top:1px;width:486px;height:45px;background:#0483c9;"></div><div class="t" style="left:21px;top:17px;font-size:18.5px;color:#fff;line-height:21.27px;font-weight:bold;line-height:20px">投资亮点</div><div class="a" style="left:409px;top:20px;width:67px;height:14px;background:#f4f6fa;border:1px solid #b4c2da"></div><div class="a" style="left:410px;top:21px;width:36px;height:12px;background:#2455ae;border-radius:0 5px 5px 0"></div><div class="t" style="left:413px;top:20px;font-size:11.5px;color:#fff;line-height:13.22px;font-weight:bold;font-family:'Liberation Mono',monospace;letter-spacing:-0.2px;line-height:13px">Zero</div><div class="t" style="left:453px;top:20px;font-size:11px;color:#1e4fa6;line-height:12.65px;font-weight:bold;font-family:'Liberation Mono',monospace;letter-spacing:-0.3px;line-height:13px">IPO</div><svg style="left:430px;top:11px" width="30" height="30" viewBox="0 0 30 30"><path d="M8.3 10.2C8.8 6.6 11.8 4.8 15 4.8C18.5 4.8 20.4 6.8 20.4 9.4C20.4 12.8 17 15.6 12.8 19.4L12.2 20H20.6V25.6H7.2V22.4C12 18 16.4 13.6 16.4 10.6C16.4 9.1 15.5 8.4 14.3 8.4C12.9 8.4 12.1 9.4 11.9 10.8z" fill="#f5b81c"/></svg><div class="a" style="left:50px;top:86px;width:9px;height:9px;background:#0a7fd0;"></div><div class="t" style="left:64px;top:82px;font-size:16px;color:#000;line-height:18.4px;font-weight:bold;line-height:18px">内容要点</div><div class="a" style="left:425px;top:84px;width:1px;height:63px;background:#d4d4d4;"></div><div class="a" style="left:69px;top:146px;width:357px;height:1px;background:#d4d4d4;"></div><svg style="left:70px;top:104px" width="6" height="10" viewBox="0 0 6 10"><rect x="0.5" y="0" width="1.2" height="1.2" fill="#1a7fd0"/><rect x="3.8" y="0" width="1.2" height="1.2" fill="#1a7fd0"/><path d="M0.6 2.5L2.75 6.5L4.9 2.5M2.75 6.3V9.5" fill="none" stroke="#1a7fd0" stroke-width="1.1"/></svg><div class="t" style="left:83px;top:102px;font-size:12px;color:#111;line-height:13.8px;line-height:14px">内容<span style="position:relative;left:-3px">：</span>市场、商业模式、资源优势…</div><svg style="left:70px;top:121px" width="6" height="10" viewBox="0 0 6 10"><rect x="0.5" y="0" width="1.2" height="1.2" fill="#1a7fd0"/><rect x="3.8" y="0" width="1.2" height="1.2" fill="#1a7fd0"/><path d="M0.6 2.5L2.75 6.5L4.9 2.5M2.75 6.3V9.5" fill="none" stroke="#1a7fd0" stroke-width="1.1"/></svg><div class="t" style="left:83px;top:118px;font-size:12px;color:#111;line-height:13.8px;line-height:14px">2– 3条</div><div class="a" style="left:50px;top:158px;width:9px;height:9px;background:#0a7fd0;"></div><div class="t" style="left:64px;top:154px;font-size:16px;color:#000;line-height:18.4px;font-weight:bold;line-height:18px">注意事项</div><div class="a" style="left:425px;top:168px;width:1px;height:64px;background:#d4d4d4;"></div><div class="a" style="left:69px;top:231px;width:357px;height:1px;background:#d4d4d4;"></div><svg style="left:70px;top:177px" width="6" height="10" viewBox="0 0 6 10"><rect x="0.5" y="0" width="1.2" height="1.2" fill="#1a7fd0"/><rect x="3.8" y="0" width="1.2" height="1.2" fill="#1a7fd0"/><path d="M0.6 2.5L2.75 6.5L4.9 2.5M2.75 6.3V9.5" fill="none" stroke="#1a7fd0" stroke-width="1.1"/></svg><div class="t" style="left:83px;top:176px;font-size:10px;color:#1a1a1a;line-height:11.5px;line-height:12px;letter-spacing:0.55px">简洁<span style="position:relative;left:-2px">，</span>统领全文</div><svg style="left:70px;top:192px" width="6" height="10" viewBox="0 0 6 10"><rect x="0.5" y="0" width="1.2" height="1.2" fill="#1a7fd0"/><rect x="3.8" y="0" width="1.2" height="1.2" fill="#1a7fd0"/><path d="M0.6 2.5L2.75 6.5L4.9 2.5M2.75 6.3V9.5" fill="none" stroke="#1a7fd0" stroke-width="1.1"/></svg><div class="t" style="left:83px;top:191px;font-size:10px;color:#1a1a1a;line-height:11.5px;line-height:12px;letter-spacing:0.55px">不要夸张、空范</div><div class="a" style="left:1px;top:346px;width:486px;height:19px;background:#dedede;"></div><div class="t" style="left:9px;top:352px;font-size:9px;color:#111;line-height:10.35px;letter-spacing:-0.42px;-webkit-text-stroke:0.15px #111;line-height:10px">Zero2IPO Financial Advisory Service</div><div class="t" style="left:453px;top:352px;font-size:8.5px;color:#111;line-height:9.77px;letter-spacing:1.3px;-webkit-text-stroke:0.2px #111;line-height:10px">[2]</div></div>

<!-- right scrollbar -->
<div class="a" style="left:683px;top:314px;width:1px;height:101px;background:#e5702c"></div><div class="a" style="left:682px;top:314px;width:1px;height:101px;background:rgba(229,112,44,0.45)"></div>
<svg style="left:668px;top:158px" width="8" height="5"><path d="M0 5L4 0L8 5z" fill="#4f5d83"/></svg>
<div class="a" style="left:665px;top:194px;width:15px;height:34px;background:#fafafa;border:1px solid #b9bac2"></div>
<div class="a" style="left:669px;top:206px;width:7px;height:1px;background:#a6a8b2"></div>
<div class="a" style="left:669px;top:210px;width:7px;height:1px;background:#a6a8b2"></div>
<div class="a" style="left:669px;top:214px;width:7px;height:1px;background:#a6a8b2"></div>
<svg style="left:669px;top:504px" width="7" height="4"><path d="M0 0L7 0L3.5 4z" fill="#4f5d83"/></svg>
<svg style="left:669px;top:516px" width="7" height="8"><path d="M0.5 3.5L3.5 0.5L6.5 3.5zM0.5 7.5L3.5 4.5L6.5 7.5z" fill="#4f5d83"/></svg>
<svg style="left:669px;top:530px" width="7" height="8"><path d="M0.5 0.5L6.5 0.5L3.5 3.5zM0.5 4.5L6.5 4.5L3.5 7.5z" fill="#4f5d83"/></svg>

<!-- ============ STATUS ============ -->
<div class="a" style="left:0;top:561px;width:684px;height:22px;background:#dcdde0;border-top:1px solid #c5c5ca"></div><div class="a" style="left:0;top:562px;width:684px;height:1px;background:#d9d9dc"></div><div class="a" style="left:0;top:563px;width:684px;height:1px;background:#c5c5ca"></div>
<div class="t" style="left:64px;top:568px;font-size:13px;color:#333;line-height:16px">Color Presentation</div>
<svg style="left:298px;top:570px" width="14" height="10"><path d="M0 1H8M0 4.5H7M0 8H6" stroke="#6a6e7a" stroke-width="1"/><path d="M8 5H14L11 8.5z" fill="#555a68"/></svg>
<div class="t" style="left:316px;top:568px;font-size:12px;color:#222;line-height:14px">备注</div>
<div class="a" style="left:355px;top:563px;width:22px;height:20px;background:#f2b48e"></div>
<svg style="left:359px;top:569px" width="14" height="12"><rect x="0" y="0" width="3.4" height="12" fill="#555a68"/><rect x="4.5" y="0" width="8.5" height="6.5" fill="#555a68"/><rect x="4.5" y="7.5" width="8.5" height="4" fill="#555a68"/></svg>
<svg style="left:386px;top:569px" width="14" height="12"><rect x="0.5" y="0.5" width="5" height="4.5" fill="#fff" stroke="#555a68"/><rect x="7" y="0" width="6" height="5.5" fill="#555a68"/><rect x="0" y="6.5" width="6" height="5" fill="#555a68"/><rect x="7" y="6.5" width="6" height="5" fill="#555a68"/></svg>
<svg style="left:413px;top:568px" width="14" height="14"><rect x="0" y="0" width="14" height="10" fill="#e8742c"/><path d="M5 2L10 5L5 8z" fill="#fff"/><path d="M7 10V13M4 13.5H10" stroke="#e8742c" stroke-width="1.2"/></svg>
<div class="t" style="left:445px;top:567px;font-size:13px;color:#333;line-height:15px">50 %</div>
<div class="a" style="left:484px;top:574px;width:10px;height:2px;background:#555a68"></div>
<div class="a" style="left:502px;top:574px;width:28px;height:2px;background:#e8742c"></div>
<div class="a" style="left:535px;top:574px;width:101px;height:2px;background:#8a8e98"></div>
<div class="a" style="left:568px;top:572px;width:1px;height:6px;background:#8a8e98"></div>
<div class="a" style="left:529px;top:568px;width:7px;height:14px;background:#fafafa;border:1px solid #777b85"></div>
<svg style="left:642px;top:569px" width="11" height="11"><path d="M5.5 0V11M0 5.5H11" stroke="#555a68" stroke-width="1.8"/></svg>
<svg style="left:661px;top:569px" width="11" height="11" viewBox="0 0 11 11"><path d="M0.5 3.5V0.5H3.5M7.5 0.5H10.5V3.5M10.5 7.5V10.5H7.5M3.5 10.5H0.5V7.5M0.5 0.5L3 3M10.5 0.5L8 3M10.5 10.5L8 8M0.5 10.5L3 8" fill="none" stroke="#555a68" stroke-width="1"/><rect x="4.5" y="4.5" width="2" height="2" fill="#555a68"/></svg>
</body></html>
